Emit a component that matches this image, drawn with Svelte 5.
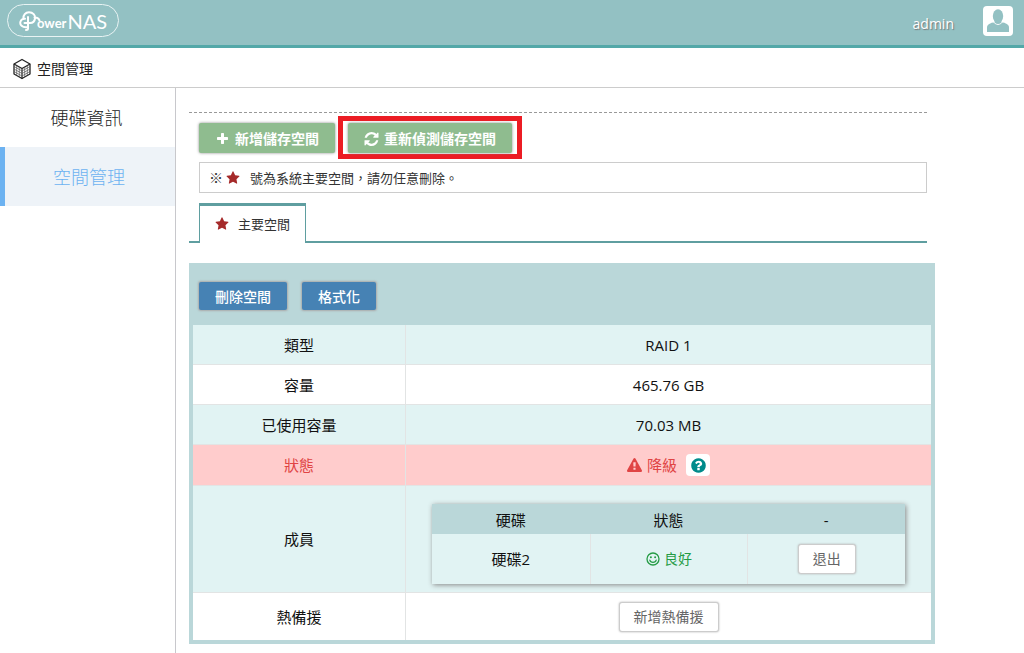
<script>
  const plain = [
    { name: '類型', value: 'RAID 1' },
    { name: '容量', value: '465.76 GB' },
    { name: '已使用容量', value: '70.03 MB' }
  ];
</script>

{#snippet star()}
  <svg class="star" viewBox="0 0 1792 1792" aria-hidden="true"><path d="M1728 647q0 22-26 48l-363 354 86 500q1 7 1 20 0 21-10.500 35.500t-30.500 14.500q-19 0-40-12l-449-236-449 236q-22 12-40 12-21 0-31.500-14.500t-10.500-35.500q0-6 2-20l86-500-364-354q-25-27-25-48 0-37 56-46l502-73 225-455q19-41 49-41t49 41l225 455 502 73q56 9 56 46z"/></svg>
{/snippet}

<div class="page">
  <header>
    <a class="logo" href="#home">
      <svg viewBox="0 0 24 22" aria-hidden="true">
        <path d="M9 7v11.500q0 1.500-2 1.500M9 17C3 18 .5 14.500 1.500 11.500 2.200 9.500 4 8.500 6 8.700M4.500 9C4 5 6.500 2.200 10 2.200c4 0 6.500 3 6 6.300-.4 3-2.500 4.500-5 4.500H5.500M15.500 7.500c3-.2 4.500 1.500 5 3"/>
      </svg>
      <span class="small">ower</span><span class="big">NAS</span>
    </a>
    <a class="user" href="#account">
      <span>admin</span>
      <svg viewBox="0 0 30 30" aria-hidden="true">
        <rect width="30" height="30" rx="4" fill="#fff"/>
        <path d="M4 26v-4.500c0-3 3-4.500 8-5.500h6c5 1 8 2.500 8 5.500V26z" fill="#93c1c3"/>
        <ellipse cx="15" cy="10.500" rx="6.200" ry="8.500" fill="#fff"/>
        <ellipse cx="15" cy="10" rx="5.200" ry="6.800" fill="#93c1c3"/>
        <path d="M11.500 14h7v2.500q-3.500 3-7 0z" fill="#93c1c3"/>
      </svg>
    </a>
  </header>

  <div class="crumb">
    <svg viewBox="0 0 20 22" aria-hidden="true">
      <path d="M10 1.500 18 6v10l-8 4.500L2 16V6z" fill="#fff" stroke="#222" stroke-width="1.300" stroke-linejoin="round"/>
      <path d="M2 6l8 4.500L18 6M10 10.500v10" fill="none" stroke="#222" stroke-width="1.200"/>
      <path d="M2 8.500l8 4.500 8-4.500M2 11l8 4.500 8-4.500M2 13.500l8 4.500 8-4.500M4.700 7.500v10M7.300 9v10M12.700 9v10M15.300 7.500v10" fill="none" stroke="#555" stroke-width=".7"/>
    </svg>
    <h1>空間管理</h1>
  </div>

  <div class="body">
    <nav>
      <a href="#disk">硬碟資訊</a>
      <a href="#space" class="active" aria-current="page">空間管理</a>
    </nav>

    <main>
      <div class="top">
        <div class="toolbar">
          <button class="green">
            <svg viewBox="0 0 1792 1792" aria-hidden="true"><path d="M1600 736v192q0 40-28 68t-68 28h-416v416q0 40-28 68t-68 28h-192q-40 0-68-28t-28-68v-416h-416q-40 0-68-28t-28-68v-192q0-40 28-68t68-28h416v-416q0-40 28-68t68-28h192q40 0 68 28t28 68v416h416q40 0 68 28t28 68z"/></svg>新增儲存空間
          </button>
          <div class="marked">
            <button class="green">
              <svg viewBox="0 0 1536 1536" aria-hidden="true"><path d="M1511 928q0 5-1 7-64 268-268 434.500t-478 166.500q-146 0-282.500-55t-243.500-157l-129 129q-19 19-45 19t-45-19-19-45v-448q0-26 19-45t45-19h448q26 0 45 19t19 45-19 45l-137 137q71 66 161 102t187 36q134 0 250-65t186-179q11-17 53-117 8-23 30-23h192q13 0 22.500 9.500t9.500 22.500zm25-800v448q0 26-19 45t-45 19h-448q-26 0-45-19t-19-45 19-45l138-138q-148-137-349-137-134 0-250 65t-186 179q-11 17-53 117-8 23-30 23h-199q-13 0-22.500-9.500t-9.500-22.500v-7q65-268 270-434.500t480-166.500q146 0 284 55.500t245 156.500l130-129q19-19 45-19t45 19 19 45z"/></svg>重新偵測儲存空間
            </button>
          </div>
        </div>
        <p class="note"><span class="mark">※</span>{@render star()}<span class="msg">號為系統主要空間，請勿任意刪除。</span></p>
        <div class="tabs">
          <button class="tab">{@render star()}主要空間</button>
        </div>
      </div>

      <section class="panel">
        <div class="actions">
          <button class="blue">刪除空間</button>
          <button class="blue">格式化</button>
        </div>
        <table class="info">
          <tbody>
            {#each plain as row}
              <tr><th scope="row">{row.name}</th><td>{row.value}</td></tr>
            {/each}
            <tr class="bad">
              <th scope="row">狀態</th>
              <td>
                <div class="state">
                  <svg viewBox="0 0 1792 1792" aria-hidden="true"><path d="M1024 1375v-190q0-14-9.500-23.500t-22.500-9.500h-192q-13 0-22.500 9.500t-9.500 23.500v190q0 14 9.500 23.500t22.500 9.500h192q13 0 22.500-9.500t9.500-23.500zm-2-374l18-459q0-12-10-19-13-11-24-11h-220q-11 0-24 11-10 7-10 21l17 457q0 10 10 16.500t24 6.500h185q14 0 23.500-6.500t10.500-16.500zm-14-934l768 1408q35 63-2 126-17 29-46.500 46t-63.500 17h-1536q-34 0-63.500-17t-46.500-46q-37-63-2-126l768-1408q17-31 47-49t65-18 65 18 47 49z"/></svg>
                  <span>降級</span>
                  <button class="help" aria-label="降級">
                    <svg viewBox="0 0 1792 1792" aria-hidden="true"><path d="M1024 1376v-192q0-14-9-23t-23-9h-192q-14 0-23 9t-9 23v192q0 14 9 23t23 9h192q14 0 23-9t9-23zm256-672q0-88-55.500-163t-138.500-116-170-41q-243 0-371 213-15 24 8 42l132 100q7 6 19 6 16 0 25-12 53-68 86-92 34-24 86-24 48 0 85.500 26t37.500 59q0 38-20 61t-68 45q-63 28-115.500 86.500t-52.500 125.500v36q0 14 9 23t23 9h192q14 0 23-9t9-23q0-19 21.500-49.500t54.500-49.500q32-18 49-28.500t46-35 44.500-48 28-60.500 12.500-81zm384 192q0 209-103 385.500t-279.500 279.500-385.500 103-385.500-103-279.500-279.500-103-385.500 103-385.500 279.500-279.500 385.500-103 385.500 103 279.500 279.500 103 385.500z"/></svg>
                  </button>
                </div>
              </td>
            </tr>
            <tr class="members">
              <th scope="row">成員</th>
              <td>
                <table class="disks">
                  <thead><tr><th scope="col">硬碟</th><th scope="col">狀態</th><th scope="col">-</th></tr></thead>
                  <tbody>
                    <tr>
                      <td>硬碟2</td>
                      <td>
                        <div class="state good">
                          <svg viewBox="0 0 14 14" aria-hidden="true">
                            <circle cx="7" cy="7" r="6" fill="none" stroke="currentColor" stroke-width="1.300"/>
                            <circle cx="4.900" cy="5.200" r="1"/><circle cx="9.100" cy="5.200" r="1"/>
                            <path d="M3.800 8.200c.8 3 5.600 3 6.400 0" fill="none" stroke="currentColor" stroke-width="1.200" stroke-linecap="round"/>
                          </svg>
                          <span>良好</span>
                        </div>
                      </td>
                      <td><button class="white">退出</button></td>
                    </tr>
                  </tbody>
                </table>
              </td>
            </tr>
            <tr class="spare"><th scope="row">熱備援</th><td><button class="white">新增熱備援</button></td></tr>
          </tbody>
        </table>
      </section>
    </main>
  </div>
</div>

<style>
  :global(body) { margin: 0; background: #fff; }
  .page, button { font-family: "Open Sans", "Noto Sans CJK TC", sans-serif; }
  .page { min-height: 100vh; display: flex; flex-direction: column; font-size: 15px; line-height: 20px; color: #222; }
  * { box-sizing: border-box; }
  a { text-decoration: none; }
  svg { flex: none; fill: currentColor; }
  button { display: inline-flex; align-items: center; justify-content: center; border: 0; margin: 0; cursor: pointer; line-height: 20px; }

  header { display: flex; align-items: center; justify-content: space-between; height: 48px; padding: 0 11px 4px 7px; background: #93c1c3; border-bottom: 3px solid #53a8a8; }
  .logo { display: flex; align-items: center; height: 33px; padding: 0 11px; border: 1px solid #e8f3f3; border-radius: 17px; color: #fff; line-height: 20px; }
  .logo svg { width: 24px; height: 22px; margin-right: -6px; fill: none; stroke: #fff; stroke-width: 2; stroke-linecap: round; stroke-linejoin: round; }
  .small { font: 700 13px/20px "Lato", sans-serif; padding-top: 4px; }
  .big { padding-left: 1px; font: 400 20px/24px "Lato", sans-serif; }
  .user { display: flex; align-items: center; gap: 29px; color: #fff; text-shadow: 1px 1px 1px #777; }
  .user span { font-size: 14px; padding-top: 6px; }
  .user svg { width: 30px; height: 30px; }

  .crumb { display: flex; align-items: center; gap: 5px; height: 40px; padding: 2px 12px 0; border-bottom: 1px solid #ccc; }
  .crumb svg { width: 20px; height: 22px; }
  h1 { margin: 0; font-size: 14px; font-weight: 400; }

  .body { display: flex; flex: 1; }
  nav { flex: 0 0 176px; border-right: 1px solid #c8c8cc; }
  nav a { display: block; padding: 20px 2px 18px 0; border-left: 0 solid #6cb2f1; font-size: 18px; line-height: 21px; font-weight: 300; text-align: center; color: #222; }
  nav a.active { border-left-width: 5px; background: #eef3f8; color: #6cb2f1; }

  main { flex: 1; min-width: 0; padding: 24px 89px 9px 13px; }
  .top { margin-right: 8px; border-top: 1px dashed #999; }
  .toolbar { display: flex; align-items: center; gap: 3px; padding: 3px 0 3px 10px; }
  .green { height: 30px; padding: 2px 16px 0; gap: 5px; border-radius: 2px; background: #8fbc8f; color: #fff; font-size: 14px; font-weight: 700; box-shadow: 0 0 3px #888; white-space: nowrap; }
  .green svg { width: 15px; height: 14px; }
  .marked { display: flex; padding: 2px 5px 1px; border: 5px solid #ec1c24; }
  .note { display: flex; align-items: center; gap: 3px; margin: 0 0 10px 10px; min-height: 31px; padding: 0 9px; border: 1px solid #ccc; font-size: 13px; color: #333; }
  .mark { font-size: 14px; }
  .msg { padding-left: 7px; }
  .star { width: 14px; height: 14px; color: #a52a2a; }
  .tabs { display: flex; padding-left: 10px; border-bottom: 2px solid #5f9ea0; }
  .tab { height: 40px; margin-bottom: -2px; padding: 0 15px 2px; gap: 9px; background: #fff; border: 1px solid #5f9ea0; border-top-width: 3px; border-bottom: 0; color: #333; font-size: 13px; }

  .panel { margin-top: 20px; padding: 0 4px 4px; background: #bad7d9; }
  .actions { display: flex; gap: 15px; padding: 19px 6px 15px; }
  .blue { height: 28px; padding: 2px 16px 0; border-radius: 2px; background: #4682b4; color: #fff; font-size: 14px; font-weight: 500; box-shadow: 0 0 2px 1px #aaa; }

  table { border-collapse: separate; border-spacing: 0; table-layout: fixed; width: 100%; }
  th, td { padding: 0; text-align: center; font-weight: 400; color: #111; }
  .info > tbody > tr { height: 40px; background: #fff; }
  .info > tbody > tr:nth-child(odd) { background: #e1f3f3; }
  .info > tbody > tr > * { border-bottom: 1px solid #e2e4e4; }
  .info > tbody > tr > th { width: 213px; border-right: 1px solid #e2e4e4; }
  .info > tbody > tr.bad { height: 41px; background: #ffcccc; }
  .info > tbody > tr.bad > th, .bad .state { color: #e04444; }
  .state { display: flex; align-items: center; justify-content: center; gap: 5px; }
  .state svg { width: 15px; height: 15px; }
  .help { width: 24px; height: 22px; margin-left: 4px; padding: 0; border-radius: 4px; background: #fff; color: #008b8b; }
  .state .help svg { width: 17px; height: 17px; }
  .info > tbody > tr.members { height: 107px; }
  .info > tbody > tr.members > td { padding: 18px 26px 8px; }
  .info > tbody > tr.spare { height: 47px; }
  .info > tbody > tr.spare > * { border-bottom: 0; }

  .disks { box-shadow: 1px 1px 5px #888; }
  .disks thead tr { height: 30px; background: #bad7d9; }
  .disks thead th { padding-top: 2px; }
  .disks tbody tr { height: 50px; background: #e1f3f3; }
  .disks td + td { border-left: 1px solid #e2e4e4; }
  .good { color: #259b45; font-size: 14px; gap: 4px; }
  .good svg { width: 14px; height: 14px; }
  .white { height: 30px; padding: 0 14px; border: 1px solid #ccc; border-radius: 3px; background: #fff; color: #666; font-size: 14px; box-shadow: 0 0 2px #aaa; vertical-align: middle; }
</style>
